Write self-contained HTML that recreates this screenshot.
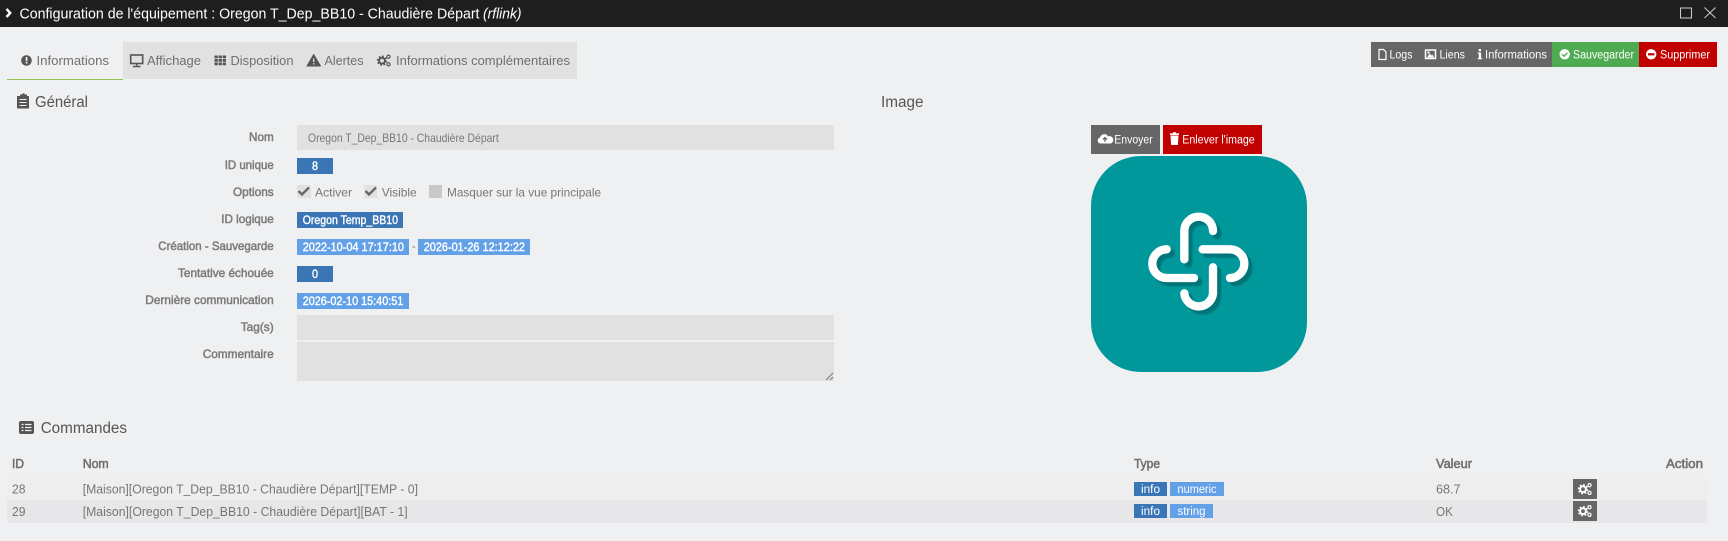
<!DOCTYPE html>
<html lang="fr"><head><meta charset="utf-8"><title>Configuration</title>
<style>
html,body{margin:0;padding:0;width:1728px;height:541px;overflow:hidden;background:#eff0f2}
svg{display:block}
text{font-family:"Liberation Sans",sans-serif;white-space:pre}
.l{font-size:12px;fill:#7b7b7b;stroke:#7b7b7b;stroke-width:.5px}
.t{font-size:12.8px;fill:#6f6f6f}
.o{font-size:12px;fill:#767676}
.w{font-size:11.5px;fill:#fff}
.b{font-size:11.5px;fill:#fff;stroke:#fff;stroke-width:.4px}
.h{font-size:15.5px;fill:#555}
.r{font-size:12.8px;fill:#767676}
.th{font-size:12.5px;fill:#6f6f6f;stroke:#6f6f6f;stroke-width:.55px}
</style></head><body>
<svg xmlns="http://www.w3.org/2000/svg" width="1728" height="541" viewBox="0 0 1728 541">
<defs>
<g id="cogs">
<circle cx="5" cy="7.2" r="2.9" fill="none" stroke="currentColor" stroke-width="2"/>
<circle cx="5" cy="7.2" r="4.4" fill="none" stroke="currentColor" stroke-width="1.6" stroke-dasharray="1.7 1.75"/>
<circle cx="11.5" cy="3.2" r="1.6" fill="none" stroke="currentColor" stroke-width="1.2"/>
<circle cx="11.5" cy="10.800" r="1.6" fill="none" stroke="currentColor" stroke-width="1.2"/>
</g>
<filter id="soft" x="-20%" y="-20%" width="140%" height="140%"><feGaussianBlur stdDeviation="2.500"/></filter>
</defs>
<rect width="1728" height="541" fill="#eff0f2"/>
<!-- title bar -->
<rect width="1728" height="27" fill="#1e1e1e"/>
<path d="M6.500 9L10.200 13L6.500 17" fill="none" stroke="#fff" stroke-width="2.400"/>
<text x="19.500" y="18.500" font-size="15.200" fill="#fff" textLength="460" lengthAdjust="spacingAndGlyphs">Configuration de l'équipement : Oregon T_Dep_BB10 - Chaudière Départ</text>
<text x="483" y="18.500" font-size="15.200" font-style="italic" fill="#fff" textLength="38.500" lengthAdjust="spacingAndGlyphs">(rflink)</text>
<rect x="1680.500" y="8" width="11" height="10" fill="none" stroke="#ccc" stroke-width="1"/>
<path d="M1704.500 7.500L1715.500 18M1715.500 7.500L1704.500 18" stroke="#ccc" stroke-width="1" fill="none"/>

<!-- tabs -->
<rect x="123" y="42" width="454" height="37" fill="#e0e1e0"/>
<rect x="7" y="79" width="116" height="1" fill="#93c149"/>
<circle cx="26.500" cy="60.500" r="5.300" fill="#555"/><rect x="25.700" y="57" width="1.700" height="4.200" fill="#eff0f2"/><rect x="25.700" y="62" width="1.700" height="1.600" fill="#eff0f2"/>
<text x="36.500" y="65" class="t" textLength="72.500" lengthAdjust="spacingAndGlyphs">Informations</text>
<rect x="130.700" y="55" width="12" height="8.500" fill="none" stroke="#555" stroke-width="1.600"/><path d="M136.700 64v2M133 66.500h7.500" stroke="#555" stroke-width="1.400"/>
<text x="147" y="65" class="t" textLength="54" lengthAdjust="spacingAndGlyphs">Affichage</text>
<path d="M214.500 55.500h3.300v2.700h-3.300zM218.600 55.500h3.300v2.700h-3.300zM222.700 55.500h3.300v2.700h-3.300zM214.500 59h3.300v2.700h-3.300zM218.600 59h3.300v2.700h-3.300zM222.700 59h3.300v2.700h-3.300zM214.500 62.500h3.300v2.700h-3.300zM218.600 62.500h3.300v2.700h-3.300zM222.700 62.500h3.300v2.700h-3.300z" fill="#555"/>
<text x="230.500" y="65" class="t" textLength="63" lengthAdjust="spacingAndGlyphs">Disposition</text>
<path d="M313.700 54.500L320.500 66H307z" fill="#555" stroke="#555" stroke-linejoin="round"/><path d="M313.700 58.500v3.500M313.700 63v1.500" stroke="#e0e1e0" stroke-width="1.300"/>
<text x="324.500" y="65" class="t" textLength="39" lengthAdjust="spacingAndGlyphs">Alertes</text>
<use href="#cogs" x="377" y="53.500" style="color:#555"/>
<text x="396" y="65" class="t" textLength="174" lengthAdjust="spacingAndGlyphs">Informations complémentaires</text>

<!-- top right buttons -->
<rect x="1371" y="42" width="181" height="25" fill="#666"/>
<rect x="1552" y="42" width="87" height="25" fill="#4fab52"/>
<rect x="1639" y="42" width="78" height="25" fill="#c10000"/>
<path d="M1379 49.500h4.500l2.500 2.500v7.500h-7z" fill="none" stroke="#fff" stroke-width="1.200"/>
<text x="1389.500" y="58.500" class="w" textLength="23" lengthAdjust="spacingAndGlyphs">Logs</text>
<rect x="1425.500" y="50" width="10" height="8.500" fill="none" stroke="#fff" stroke-width="1.500"/><path d="M1427 57.500l2.500-4l2 2l1-1l1.500 3zM1427.500 51.500h2v2h-2z" fill="#fff"/>
<text x="1439.500" y="58.500" class="w" textLength="25.500" lengthAdjust="spacingAndGlyphs">Liens</text>
<rect x="1478.700" y="49" width="2.300" height="2.300" fill="#fff"/><path d="M1477.800 52.500h3.300v5.500h1v1.300h-4.300V58h1v-4.200h-1z" fill="#fff"/>
<text x="1485" y="58.500" class="w" textLength="62" lengthAdjust="spacingAndGlyphs">Informations</text>
<circle cx="1564.700" cy="54.300" r="5.200" fill="#fff"/><path d="M1562 54.300l2 2l3.300-3.500" fill="none" stroke="#4fab52" stroke-width="1.400"/>
<text x="1573" y="58.500" class="w" textLength="61" lengthAdjust="spacingAndGlyphs">Sauvegarder</text>
<circle cx="1651.200" cy="54.300" r="5.200" fill="#fff"/><rect x="1648" y="53.200" width="6.400" height="2.200" fill="#c10000"/>
<text x="1660" y="58.500" class="w" textLength="50" lengthAdjust="spacingAndGlyphs">Supprimer</text>

<!-- Général -->
<path d="M17 96h3v-1.500h2.200a1.300 1.300 0 0 1 2.600 0H27v1.500h2v12.500H17z" fill="#555"/>
<path d="M19.500 99.500h7M19.500 102.500h7M19.500 105.500h7" stroke="#eff0f2" stroke-width="1"/>
<text x="35" y="107" class="h" textLength="53" lengthAdjust="spacingAndGlyphs">Général</text>
<text x="881" y="107" class="h" textLength="42.500" lengthAdjust="spacingAndGlyphs">Image</text>

<!-- labels -->
<text x="249" y="141" class="l" textLength="24.700" lengthAdjust="spacingAndGlyphs">Nom</text>
<text x="224.700" y="169" class="l" textLength="49" lengthAdjust="spacingAndGlyphs">ID unique</text>
<text x="233" y="196" class="l" textLength="40.700" lengthAdjust="spacingAndGlyphs">Options</text>
<text x="221.300" y="223" class="l" textLength="52.400" lengthAdjust="spacingAndGlyphs">ID logique</text>
<text x="158.300" y="250" class="l" textLength="115.400" lengthAdjust="spacingAndGlyphs">Création - Sauvegarde</text>
<text x="178" y="277" class="l" textLength="95.700" lengthAdjust="spacingAndGlyphs">Tentative échouée</text>
<text x="145.300" y="304" class="l" textLength="128.400" lengthAdjust="spacingAndGlyphs">Dernière communication</text>
<text x="240.700" y="331" class="l" textLength="33" lengthAdjust="spacingAndGlyphs">Tag(s)</text>
<text x="202.700" y="358" class="l" textLength="71" lengthAdjust="spacingAndGlyphs">Commentaire</text>

<!-- fields -->
<rect x="297" y="125" width="537" height="25" fill="#e0e1e0"/>
<text x="308" y="142" font-size="11.800" fill="#777" textLength="190.700" lengthAdjust="spacingAndGlyphs">Oregon T_Dep_BB10 - Chaudière Départ</text>
<rect x="297" y="158" width="36" height="16" fill="#3a75b5"/>
<text x="312" y="170" class="b" textLength="6" lengthAdjust="spacingAndGlyphs">8</text>

<rect x="297" y="185" width="14" height="13" fill="#e0e1e0"/>
<path d="M298.500 191l3.500 3.500l7-7" fill="none" stroke="#666" stroke-width="2.300"/>
<text x="315" y="196.300" class="o" textLength="37" lengthAdjust="spacingAndGlyphs">Activer</text>
<rect x="364" y="185" width="13" height="13" fill="#e0e1e0"/>
<path d="M365.500 191l3.500 3.500l7-7" fill="none" stroke="#666" stroke-width="2.300"/>
<text x="381.700" y="196.300" class="o" textLength="35" lengthAdjust="spacingAndGlyphs">Visible</text>
<rect x="429" y="185" width="13" height="13" fill="#c8c8c8"/>
<text x="447" y="196.300" class="o" textLength="154" lengthAdjust="spacingAndGlyphs">Masquer sur la vue principale</text>

<rect x="297" y="212" width="106" height="16" fill="#3a75b5"/>
<text x="302.700" y="224" class="b" textLength="95.300" lengthAdjust="spacingAndGlyphs">Oregon Temp_BB10</text>

<rect x="297" y="239" width="112" height="16" fill="#62a0e8"/>
<text x="302.700" y="251" class="b" textLength="101.300" lengthAdjust="spacingAndGlyphs">2022-10-04 17:17:10</text>
<text x="412" y="250" font-size="11" fill="#777">-</text>
<rect x="418" y="239" width="112" height="16" fill="#62a0e8"/>
<text x="423.700" y="251" class="b" textLength="101.300" lengthAdjust="spacingAndGlyphs">2026-01-26 12:12:22</text>

<rect x="297" y="266" width="36" height="16" fill="#3a75b5"/>
<text x="312" y="278" class="b" textLength="6" lengthAdjust="spacingAndGlyphs">0</text>

<rect x="297" y="293" width="112" height="16" fill="#62a0e8"/>
<text x="302.700" y="305" class="b" textLength="100.600" lengthAdjust="spacingAndGlyphs">2026-02-10 15:40:51</text>

<rect x="297" y="315" width="537" height="25" fill="#e0e1e0"/>
<rect x="297" y="342" width="537" height="39" fill="#e0e1e0"/>
<path d="M826 380l7-7M830 380l3-3" stroke="#777" stroke-width="1"/>

<!-- image buttons -->
<rect x="1091" y="125" width="69" height="29" fill="#666"/>
<path d="M1100.500 143.500a3 3 0 0 1-.5-5.900a4.300 4.300 0 0 1 8-1.200a3.600 3.600 0 0 1 3 7.100z" fill="#fff"/>
<path d="M1105 142v-4M1103 139.500l2-2l2 2" fill="none" stroke="#666" stroke-width="1.300"/>
<text x="1114.300" y="143.700" class="w" textLength="38.400" lengthAdjust="spacingAndGlyphs">Envoyer</text>
<rect x="1163" y="125" width="99" height="29" fill="#c10000"/>
<path d="M1170.500 135.500h8l-.6 9.500h-6.800z" fill="#fff"/><rect x="1170" y="133.300" width="9" height="1.700" fill="#fff"/><rect x="1173" y="132.200" width="3" height="1.500" fill="#fff"/>
<text x="1182.300" y="143.700" class="w" textLength="72.400" lengthAdjust="spacingAndGlyphs">Enlever l'image</text>

<!-- logo -->
<rect x="1091" y="156" width="216" height="216" rx="50" ry="50" fill="#00989b"/>
<g transform="translate(1120 210) scale(.33333)" fill="none" stroke-linecap="round" stroke-width="25">
<g stroke="#06686b" opacity=".75" transform="translate(12 12)" filter="url(#soft)">
<path d="M193 148V63A43 43 0 0 1 279 63"/><path d="M248 118H330A43 43 0 0 1 330 204"/><path d="M279 172V242A43 43 0 0 1 193 250"/><path d="M222 204H140A43 43 0 0 1 140 118"/>
</g>
<g stroke="#fff">
<path d="M193 148V63A43 43 0 0 1 279 63"/><path d="M248 118H330A43 43 0 0 1 330 204"/><path d="M279 172V242A43 43 0 0 1 193 250"/><path d="M222 204H140A43 43 0 0 1 140 118"/>
</g>
</g>

<!-- Commandes -->
<rect x="19" y="421" width="15" height="13" rx="2" fill="#555"/>
<path d="M21.500 424.500h2M21.500 427.500h2M21.500 430.500h2M25 424.500h6.500M25 427.500h6.500M25 430.500h6.500" stroke="#eff0f2" stroke-width="1.300"/>
<text x="40.700" y="433" class="h" textLength="86.300" lengthAdjust="spacingAndGlyphs">Commandes</text>

<text x="12" y="468" class="th" textLength="12" lengthAdjust="spacingAndGlyphs">ID</text>
<text x="82.700" y="468" class="th" textLength="26" lengthAdjust="spacingAndGlyphs">Nom</text>
<text x="1134" y="468" class="th" textLength="26" lengthAdjust="spacingAndGlyphs">Type</text>
<text x="1436" y="468" class="th" textLength="36" lengthAdjust="spacingAndGlyphs">Valeur</text>
<text x="1666" y="468" class="th" textLength="37" lengthAdjust="spacingAndGlyphs">Action</text>

<rect x="7" y="478" width="1700" height="22" fill="#edeeed"/>
<rect x="7" y="500" width="1700" height="23" fill="#e7e7e9"/>

<text x="12" y="493.500" class="r" textLength="13.500" lengthAdjust="spacingAndGlyphs">28</text>
<text x="82.700" y="493.500" class="r" textLength="335.300" lengthAdjust="spacingAndGlyphs">[Maison][Oregon T_Dep_BB10 - Chaudière Départ][TEMP - 0]</text>
<rect x="1134" y="482" width="33" height="14" fill="#3a75b5"/>
<text x="1141" y="492.800" class="w" textLength="19" lengthAdjust="spacingAndGlyphs">info</text>
<rect x="1170" y="482" width="54" height="14" fill="#62a0e8"/>
<text x="1177.500" y="492.800" class="w" textLength="39" lengthAdjust="spacingAndGlyphs">numeric</text>
<text x="1436" y="493.500" class="r" textLength="24.500" lengthAdjust="spacingAndGlyphs">68.7</text>
<rect x="1573" y="479" width="24" height="20" fill="#666"/>
<use href="#cogs" x="1578" y="482" style="color:#fff"/>

<text x="12" y="516" class="r" textLength="13.500" lengthAdjust="spacingAndGlyphs">29</text>
<text x="82.700" y="516" class="r" textLength="325" lengthAdjust="spacingAndGlyphs">[Maison][Oregon T_Dep_BB10 - Chaudière Départ][BAT - 1]</text>
<rect x="1134" y="504" width="33" height="14" fill="#3a75b5"/>
<text x="1141" y="514.800" class="w" textLength="19" lengthAdjust="spacingAndGlyphs">info</text>
<rect x="1170" y="504" width="43" height="14" fill="#62a0e8"/>
<text x="1177.500" y="514.800" class="w" textLength="28" lengthAdjust="spacingAndGlyphs">string</text>
<text x="1436" y="516" class="r" textLength="17" lengthAdjust="spacingAndGlyphs">OK</text>
<rect x="1573" y="501" width="24" height="20" fill="#666"/>
<use href="#cogs" x="1578" y="504" style="color:#fff"/>
</svg>
</body></html>
